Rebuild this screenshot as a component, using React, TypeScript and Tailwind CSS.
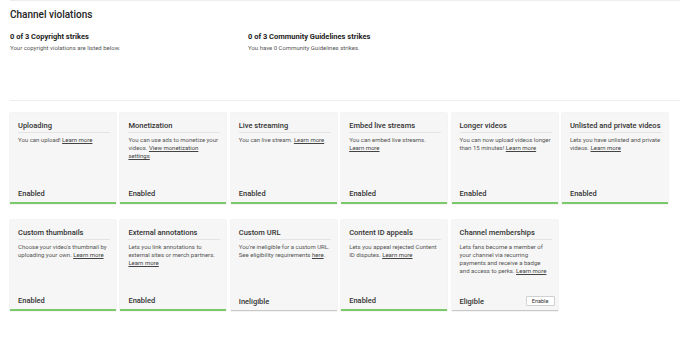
import React from 'react';

type Feature = {
  title: string;
  lines: string[];
  link?: string;
  status: string;
  ok: boolean;
  action?: string;
};

// descriptions are broken into lines the way the page wraps them
const features: Feature[] = [
  { title: 'Uploading', lines: ['You can upload! @'], link: 'Learn more', status: 'Enabled', ok: true },
  { title: 'Monetization', lines: ['You can use ads to monetize your', 'videos. @'], link: 'View monetization', status: 'Enabled', ok: true },
  { title: 'Live streaming', lines: ['You can live stream. @'], link: 'Learn more', status: 'Enabled', ok: true },
  { title: 'Embed live streams', lines: ['You can embed live streams.', '@'], link: 'Learn more', status: 'Enabled', ok: true },
  { title: 'Longer videos', lines: ['You can now upload videos longer', 'than 15 minutes! @'], link: 'Learn more', status: 'Enabled', ok: true },
  { title: 'Unlisted and private videos', lines: ['Lets you have unlisted and private', 'videos. @'], link: 'Learn more', status: 'Enabled', ok: true },
  { title: 'Custom thumbnails', lines: ["Choose your video's thumbnail by", 'uploading your own. @'], link: 'Learn more', status: 'Enabled', ok: true },
  { title: 'External annotations', lines: ['Lets you link annotations to', 'external sites or merch partners.', '@'], link: 'Learn more', status: 'Enabled', ok: true },
  { title: 'Custom URL', lines: ["You're ineligible for a custom URL.", 'See eligibility requirements @.'], link: 'here', status: 'Ineligible', ok: false },
  { title: 'Content ID appeals', lines: ['Lets you appeal rejected Content', 'ID disputes. @'], link: 'Learn more', status: 'Enabled', ok: true },
  { title: 'Channel memberships', lines: ['Lets fans become a member of', 'your channel via recurring', 'payments and receive a badge', 'and access to perks. @'], link: 'Learn more', status: 'Eligible', ok: false, action: 'Enable' },
];

function Line({ text, link }: { text: string; link?: string }) {
  const [before, after] = text.split('@');
  return (
    <div className="whitespace-nowrap">
      {before}
      {after !== undefined && <span className="underline text-[#444]">{link}</span>}
      {after}
    </div>
  );
}

function FeatureCard({ f }: { f: Feature }) {
  return (
    <div
      className={
        'flex flex-col h-[91px] bg-[#f6f6f6] pl-2 pr-[6px] pt-[8px] pb-[3px] shadow-[0_0_1px_rgba(0,0,0,0.25)] ' +
        (f.ok ? 'border-b-2 border-[#7cc96c]' : 'border-b border-[#c8c8c8]')
      }
    >
      <div className="text-[7.5px] leading-[9px] font-medium text-[#333] pb-[2px] border-b border-[#e4e4e4] whitespace-nowrap">
        {f.title}
      </div>
      <div className="mt-[3px] text-[6px] leading-[8px] text-[#555]">
        {f.lines.map((l, i) => (
          <Line key={i} text={l} link={f.link} />
        ))}
        {f.title === 'Monetization' && <div className="underline text-[#444]">settings</div>}
      </div>
      <div className="mt-auto flex items-center justify-between">
        <span className="text-[7.5px] leading-[10px] font-medium text-[#333]">{f.status}</span>
        {f.action && (
          <button className="bg-white border border-[#d0d0d0] rounded-[1px] w-[29px] mr-[-3px] mb-[1px] text-[5.5px] leading-[8px] text-[#333]">
            {f.action}
          </button>
        )}
      </div>
    </div>
  );
}

export default function App() {
  return (
    <div className="w-[690px] h-[338px] bg-white font-['Roboto',sans-serif] overflow-hidden">
      <div className="mx-[10px] border-t border-[#eeeeee]">
        <h1 className="pt-[7px] text-[10px] leading-[14px] font-medium text-[#222]">Channel violations</h1>

        <div className="flex pt-[10px] h-[79px] border-b border-[#eeeeee]">
          <div className="w-[238px]">
            <div className="text-[7.5px] leading-[10px] font-bold text-[#222]">0 of 3 Copyright strikes</div>
            <div className="mt-[2px] text-[6px] leading-[8px] text-[#555]">Your copyright violations are listed below.</div>
          </div>
          <div>
            <div className="text-[7.5px] leading-[10px] font-bold text-[#222]">0 of 3 Community Guidelines strikes</div>
            <div className="mt-[2px] text-[6px] leading-[8px] text-[#555]">You have 0 Community Guidelines strikes.</div>
          </div>
        </div>

        <div className="mt-[12px] grid grid-cols-[repeat(6,106px)] gap-x-[4.4px] gap-y-[16px]">
          {features.map((f) => (
            <FeatureCard key={f.title} f={f} />
          ))}
        </div>
      </div>
    </div>
  );
}
